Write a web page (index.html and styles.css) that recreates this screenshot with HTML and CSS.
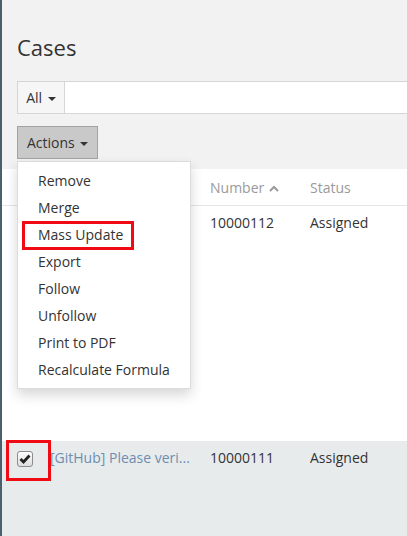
FILE: index.html
```html
<!DOCTYPE html>
<html lang="en">

<head>
    <meta charset="UTF-8">
    <meta name="viewport" content="width=device-width, initial-scale=1.0">
    <title>Cases</title>
    <link rel="stylesheet" href="styles.css">
</head>

<body>
    <div class="top">
        <h1 class="title">Cases</h1>
        <div class="search">
            <button class="filter-btn">All <span class="caret"></span></button>
            <input class="search-input" type="text">
        </div>
        <div class="actions">
            <button class="actions-btn">Actions <span class="caret"></span></button>
            <ul class="menu">
                <li>Remove</li>
                <li>Merge</li>
                <li class="marked">Mass Update</li>
                <li>Export</li>
                <li>Follow</li>
                <li>Unfollow</li>
                <li>Print to PDF</li>
                <li>Recalculate Formula</li>
            </ul>
        </div>
    </div>

    <table class="list">
        <thead>
            <tr>
                <th class="col-check"><span class="check"></span></th>
                <th class="col-name"></th>
                <th class="col-number">Number
                    <svg class="sort" width="10" height="7" viewBox="0 0 10 7">
                        <path d="M1 6 L5 2 L9 6" fill="none" stroke="#9a9a9a" stroke-width="2"/>
                    </svg>
                </th>
                <th>Status</th>
            </tr>
        </thead>
        <tbody>
            <tr class="row-tall">
                <td class="col-check"><span class="check"></span></td>
                <td class="col-name"></td>
                <td>10000112</td>
                <td>Assigned</td>
            </tr>
            <tr class="row-selected">
                <td class="col-check">
                    <span class="check checked">
                        <svg width="12" height="10" viewBox="0 0 12 10">
                            <path d="M1.5 5 L4.5 8 L10.5 1.5" fill="none" stroke="#222" stroke-width="2.8"/>
                        </svg>
                    </span>
                    <span class="mark-box"></span>
                </td>
                <td class="col-name"><a href="#">[GitHub] Please veri...</a></td>
                <td>10000111</td>
                <td>Assigned</td>
            </tr>
        </tbody>
    </table>
</body>

</html>
```

FILE: styles.css
```css
body {
    margin: 0;
    height: 536px;
    overflow: hidden;
    background-color: #fff;
    border-left: 2px solid #4b606c;
    font-family: "Open Sans", "Liberation Sans", sans-serif;
    font-size: 14px;
    color: #333;
}

.top {
    display: flex;
    flex-direction: column;
    align-items: flex-start;
    padding: 32px 0 10px 15px;
    background-color: #f2f2f2;
}

.title {
    margin: 0;
    font-size: 22px;
    font-weight: 400;
    line-height: 30px;
    color: #333;
}

/* search bar runs on past the right edge, so no right border */
.search {
    display: flex;
    align-self: stretch;
    height: 33px;
    margin-top: 19px;
    box-sizing: border-box;
    border: 1px solid #d6d6d6;
    border-right: 0;
    background-color: #fff;
}

.filter-btn {
    width: 47px;
    padding: 0;
    border: 0;
    border-right: 1px solid #d6d6d6;
    background-color: #f6f6f6;
    font-family: inherit;
    font-size: 14px;
    color: #333;
}

.search-input {
    flex: 1;
    min-width: 0;
    border: 0;
    outline: none;
}

.caret {
    display: inline-block;
    margin-left: 2px;
    vertical-align: middle;
    border-top: 4px solid #333;
    border-left: 4px solid transparent;
    border-right: 4px solid transparent;
}

.actions {
    position: relative;
    margin-top: 12px;
}

.actions-btn {
    height: 33px;
    padding: 0 9px;
    border: 1px solid #a3a3a3;
    background-color: #c9c9c9;
    font-family: inherit;
    font-size: 14px;
    color: #333;
}

/* dropdown opened under the Actions button */
.menu {
    position: absolute;
    top: 35px;
    left: 0;
    z-index: 2;
    width: 174px;
    margin: 0;
    padding: 5px 0;
    box-sizing: border-box;
    list-style: none;
    background-color: #fff;
    border: 1px solid #dcdcdc;
    box-shadow: 0 6px 12px rgba(0, 0, 0, 0.16);
}

.menu li {
    position: relative;
    padding: 0 20px;
    line-height: 27px;
    white-space: nowrap;
}

.menu .marked::after {
    content: "";
    position: absolute;
    top: 0;
    left: 4px;
    width: 112px;
    height: 29px;
    box-sizing: border-box;
    border: 3px solid #f00a14;
}

.list {
    width: 100%;
    border-collapse: collapse;
}

.list th,
.list td {
    padding: 0;
    text-align: left;
    vertical-align: top;
    font-weight: 400;
    white-space: nowrap;
}

.list th {
    height: 36px;
    vertical-align: middle;
    color: #9a9a9a;
    border-bottom: 1px solid #e6e6e6;
}

.list td {
    padding-top: 7px;
    line-height: 20px;
}

.col-check {
    position: relative;
    width: 33px;
    padding-left: 15px !important;
}

.col-name {
    width: 160px;
}

.col-number {
    width: 100px;
}

.sort {
    margin-left: 1px;
    vertical-align: 1px;
}

.row-tall td {
    height: 228px;
}

.row-selected td {
    height: 96px;
    padding-top: 7px;
    background-color: #e8ebec;
}

.check {
    display: inline-flex;
    align-items: center;
    justify-content: center;
    width: 16px;
    height: 16px;
    margin-top: 3px;
    box-sizing: border-box;
    border: 1px solid #8c8c8c;
    border-radius: 3px;
    background: linear-gradient(#fdfdfd, #dedede);
    vertical-align: top;
}

/* red frame drawn round the ticked box */
.mark-box {
    position: absolute;
    top: -1px;
    left: 4px;
    width: 45px;
    height: 41px;
    box-sizing: border-box;
    border: 3px solid #f00a14;
}

.list a {
    color: #6e8db0;
    text-decoration: none;
}
```
